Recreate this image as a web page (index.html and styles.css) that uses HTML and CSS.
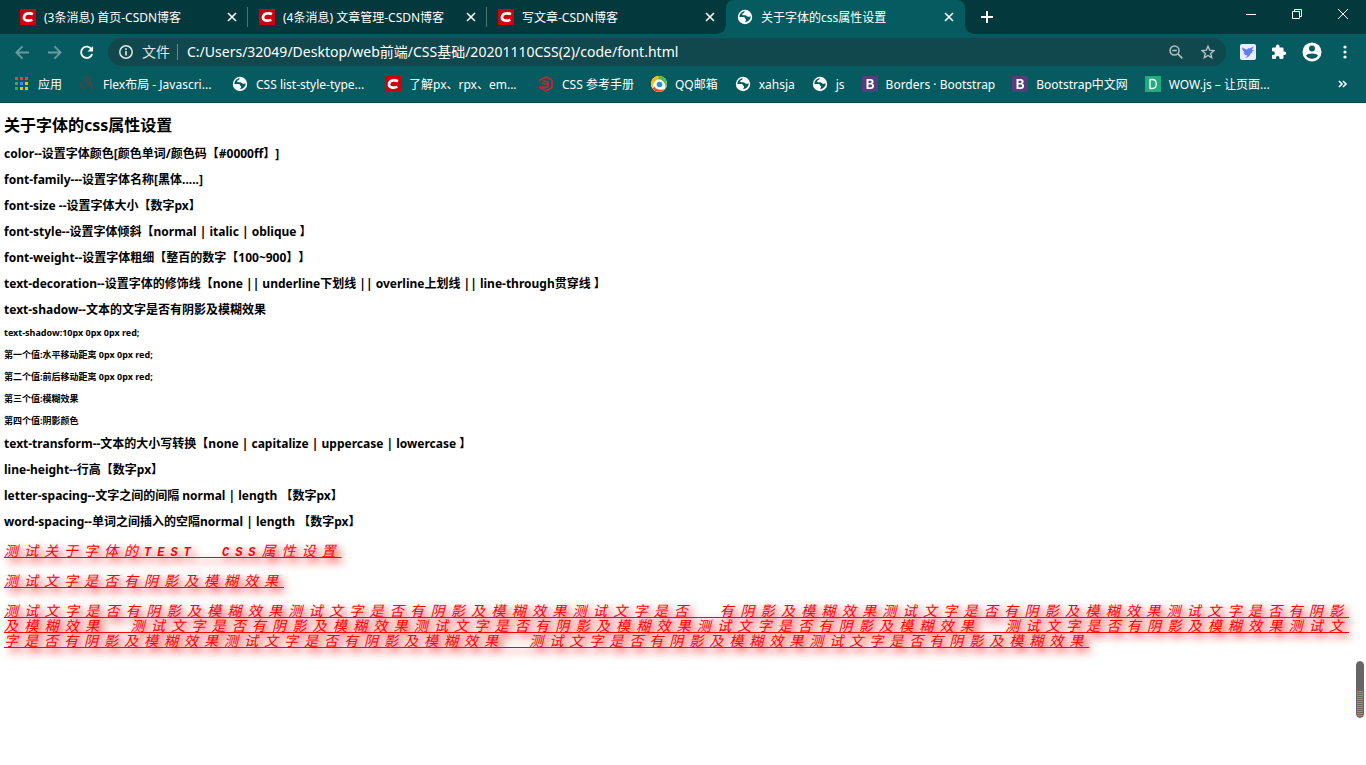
FILE: index.html
```html
<!DOCTYPE html>
<html lang="zh-CN">
<head>
<meta charset="utf-8">
<title>关于字体的css属性设置</title>
<link rel="stylesheet" href="styles.css">
</head>
<body>
<svg class="defs" aria-hidden="true">
  <symbol id="close" viewBox="0 0 10 10"><path d="M1 1l8 8M9 1l-8 8" stroke="currentColor" stroke-width="1.600" fill="none"/></symbol>
  <symbol id="csdn" viewBox="0 0 16 16"><path fill="#c9040f" d="M0 0h16v16H0z"/><path d="M13 5.200C10 3.700 4.600 4 4 8c-.6 4 5 4.200 8.400 2.900" fill="none" stroke="#fff" stroke-width="2.600"/></symbol>
  <symbol id="globe" viewBox="0 0 16 16"><circle cx="8" cy="8" r="7.200" fill="#fff"/><path d="M8.500 2.300c-1.300.2-1 1.300-1.700 1.700-.8.500-1.700.2-1.700 1.200 0 1.300 1.800 1 3.200 1 1.400.1 1.500 1.600 2.900 1.600 1 0 1.600-.5 2.600-.2-.2 3-2.300 5.300-5.500 5.600-.2-1.200.8-1.300.8-2.400 0-1-1.200-.9-1.200-1.800 0-.8-.8-1.100-2-1.100H2.400c0-3.100 2.600-5.800 6.100-5.600z" fill="#055b60"/></symbol>
  <symbol id="boot" viewBox="0 0 16 16"><rect width="16" height="16" rx="2" fill="#563d7c"/><path fill-rule="evenodd" fill="#fff" d="M4.500 3h4.200c1.900 0 2.900.9 2.900 2.400 0 1-.5 1.800-1.400 2.200 1.200.3 1.900 1.200 1.900 2.400 0 1.900-1.300 3-3.400 3H4.500zM6.500 4.700v2.200h1.700c.9 0 1.400-.4 1.400-1.100S9.100 4.700 8.200 4.700zM6.500 8.500v2.800h1.900c1 0 1.600-.5 1.600-1.400s-.6-1.400-1.600-1.400z"/></symbol>
</svg>

<header class="browser">
  <div class="strip">
    <nav class="tabs" aria-label="标签页">
      <div class="tab"><svg class="icon"><use href="#csdn"/></svg><span class="label">(3条消息) 首页-CSDN博客</span><button class="close" aria-label="关闭"><svg><use href="#close"/></svg></button></div>
      <div class="tab"><svg class="icon"><use href="#csdn"/></svg><span class="label">(4条消息) 文章管理-CSDN博客</span><button class="close" aria-label="关闭"><svg><use href="#close"/></svg></button></div>
      <div class="tab plain"><svg class="icon"><use href="#csdn"/></svg><span class="label">写文章-CSDN博客</span><button class="close" aria-label="关闭"><svg><use href="#close"/></svg></button></div>
      <div class="tab active"><svg class="icon"><use href="#globe"/></svg><span class="label">关于字体的css属性设置</span><button class="close" aria-label="关闭"><svg><use href="#close"/></svg></button></div>
    </nav>
    <button class="new" aria-label="新标签页"><svg viewBox="0 0 12 12"><path d="M6 0v12M0 6h12" stroke="#fff" stroke-width="2"/></svg></button>
    <div class="window">
      <button aria-label="最小化"><svg viewBox="0 0 10 10"><path d="M0 5.500h10" stroke="#fff"/></svg></button>
      <button aria-label="还原"><svg viewBox="0 0 10 10"><path d="M.5 2.500h7v7h-7zM2.500 2.500v-2h7v7h-2" fill="none" stroke="#fff"/></svg></button>
      <button aria-label="关闭窗口"><svg viewBox="0 0 10 10"><path d="M0 0l10 10M10 0L0 10" stroke="#fff"/></svg></button>
    </div>
  </div>

  <div class="toolbar">
    <button class="tool dim" aria-label="后退"><svg viewBox="0 0 16 16"><path d="M15 8H2M8 1.500L1.500 8 8 14.500" fill="none" stroke="currentColor" stroke-width="2"/></svg></button>
    <button class="tool dim" aria-label="前进"><svg viewBox="0 0 16 16"><path d="M1 8h13M8 1.500L14.500 8 8 14.500" fill="none" stroke="currentColor" stroke-width="2"/></svg></button>
    <button class="tool" aria-label="重新加载"><svg viewBox="0 0 16 16"><path d="M13.300 4.500A6 6 0 1 0 14 9.500" fill="none" stroke="#fff" stroke-width="2"/><path d="M15 1v6H9z" fill="#fff"/></svg></button>
    <div class="omnibox">
      <svg class="info" viewBox="0 0 14 14"><circle cx="7" cy="7" r="6.200" fill="none" stroke="#dfe8e8" stroke-width="1.500"/><path d="M7 6v4.500M7 3.200v1.700" stroke="#dfe8e8" stroke-width="1.600"/></svg>
      <label class="scheme" for="url">文件</label>
      <input id="url" class="url" type="text" value="C:/Users/32049/Desktop/web前端/CSS基础/20201110CSS(2)/code/font.html">
      <button class="inner" aria-label="缩放"><svg viewBox="0 0 14 14"><circle cx="5.500" cy="5.500" r="4.500" fill="none" stroke="#b4c2c3" stroke-width="1.500"/><path d="M9 9l4.300 4.300M3.200 5.500h4.600" stroke="#b4c2c3" stroke-width="1.700"/></svg></button>
      <button class="inner" aria-label="收藏"><svg viewBox="0 0 14 14"><path d="M7 1.200l1.700 4 4.300.4-3.300 2.900 1 4.200L7 10.500l-3.700 2.200 1-4.200L1 5.600l4.300-.4z" fill="none" stroke="#b4c2c3" stroke-width="1.400"/></svg></button>
    </div>
    <div class="extras">
      <button class="ext" aria-label="飞鸟扩展"><svg viewBox="0 0 16 16"><rect width="16" height="16" rx="2" fill="#e9ecfb"/><path d="M2 3.500l5 2.300c.5-1.200 1.500-1.700 2.700-1.300L14 2.200l-2.300 3.700 2.600.1-2.400 1.700 1 .6-2.300 1.300c-.5 2.400-2.200 3.800-5.200 4.300l2-2.500C4.500 11 3.300 9.500 3.700 8.200l1.400.3C3.200 7.100 2.200 5.500 2 3.500z" fill="#617df2"/></svg></button>
      <button class="ext" aria-label="扩展程序"><svg viewBox="0 0 16 16"><path d="M13.500 7.500h-1V4.700c0-.8-.6-1.300-1.300-1.300H8.500v-1a1.800 1.800 0 0 0-3.600 0v1H2.200C1.500 3.400 1 4 1 4.700v2.600h1a1.900 1.900 0 0 1 0 3.800H1v2.600c0 .7.500 1.300 1.200 1.300h2.600v-1a1.900 1.900 0 0 1 3.800 0v1h2.600c.7 0 1.300-.6 1.300-1.300v-2.600h1a1.800 1.800 0 0 0 0-3.600z" fill="#fff"/></svg></button>
      <button class="ext big" aria-label="用户"><svg viewBox="0 0 20 20"><circle cx="10" cy="10" r="9.500" fill="#fff"/><circle cx="10" cy="6.500" r="3" fill="#055b60"/><path d="M4 13.700c1.200-3 10.800-3 12 0-2.700 3.900-9.300 3.900-12 0z" fill="#055b60"/></svg></button>
      <button class="ext" aria-label="菜单"><svg viewBox="0 0 16 16"><circle cx="8" cy="3" r="1.600" fill="#fff"/><circle cx="8" cy="8" r="1.600" fill="#fff"/><circle cx="8" cy="13" r="1.600" fill="#fff"/></svg></button>
    </div>
  </div>

  <nav class="bookmarks" aria-label="书签栏">
    <a href="#"><svg class="icon" viewBox="0 0 16 16"><path fill="#ea4335" d="M1 1h3v3H1zM6 1h3v3H6zM11 1h3v3h-3z"/><path fill="#34a853" d="M1 6h3v3H1zM1 11h3v3H1z"/><path fill="#4285f4" d="M6 6h3v3H6z"/><path fill="#fbbc05" d="M11 6h3v3h-3zM6 11h3v3H6zM11 11h3v3h-3z"/></svg><span>应用</span></a>
    <a href="#" class="long"><svg class="icon" viewBox="0 0 16 16"><circle cx="8.700" cy="3.500" r="2.600" fill="none" stroke="#43474a" stroke-width="1.600"/><path d="M1.500 5.500c.3 3 1.200 5.500 3 7 2.500-.8 5-3.500 7.200-6.500.3 3 1 5.500 2.500 8.500" fill="none" stroke="#43474a" stroke-width="1.800"/></svg><span>Flex布局 - Javascri...</span></a>
    <a href="#" class="long"><svg class="icon"><use href="#globe"/></svg><span>CSS list-style-type...</span></a>
    <a href="#" class="long"><svg class="icon"><use href="#csdn"/></svg><span>了解px、rpx、em...</span></a>
    <a href="#"><svg class="icon" viewBox="0 0 16 16"><path d="M2 5.500V4l6-3 6 3v7.500L8 15l-6-3.500V10M5 4.500l5 1.500v2.500L4 7M10 8.500v2L7.500 12 4 10.500" fill="none" stroke="#d5252c" stroke-width="1.500"/></svg><span>CSS 参考手册</span></a>
    <a href="#"><svg class="icon" viewBox="0 0 16 16"><circle cx="8" cy="8" r="8" fill="#fff"/><path d="M8 0a8 8 0 0 0-6.500 12.500C2 6 5 4 9 4z" fill="#fcb913"/><path d="M8 0a8 8 0 0 1 6.500 12.500C15 7 12 4 7 3z" fill="#59b947"/><path d="M1.500 12.500a8 8 0 0 0 13 0C11 15 6 14 4 10z" fill="#ef4e23"/><circle cx="8" cy="8.500" r="5" fill="#fff"/><circle cx="8.500" cy="8.500" r="2.800" fill="#2390dc"/></svg><span>QQ邮箱</span></a>
    <a href="#"><svg class="icon"><use href="#globe"/></svg><span>xahsja</span></a>
    <a href="#"><svg class="icon"><use href="#globe"/></svg><span>js</span></a>
    <a href="#"><svg class="icon"><use href="#boot"/></svg><span>Borders · Bootstrap</span></a>
    <a href="#"><svg class="icon"><use href="#boot"/></svg><span>Bootstrap中文网</span></a>
    <a href="#"><svg class="icon" viewBox="0 0 16 16"><path fill="#22ac7d" d="M0 0h16v16H0z"/><path d="M5 3.500h2.500c5 0 5 9 0 9H5z" fill="none" stroke="#fff" stroke-width="1.300"/></svg><span>WOW.js – 让页面...</span></a>
    <button class="more" aria-label="更多书签"><svg viewBox="0 0 10 8"><path d="M1 1l3 3-3 3M5 1l3 3-3 3" fill="none" stroke="#fff" stroke-width="1.600"/></svg></button>
  </nav>
</header>

<main class="page">
  <h1>关于字体的css属性设置</h1>
  <div class="group">
    <h2>color--设置字体颜色[颜色单词/颜色码【#0000ff】]</h2>
    <h2>font-family---设置字体名称[黑体.....]</h2>
    <h2>font-size --设置字体大小【数字px】</h2>
    <h2>font-style--设置字体倾斜【normal | italic | oblique 】</h2>
    <h2>font-weight--设置字体粗细【整百的数字【100~900】】</h2>
    <h2>text-decoration--设置字体的修饰线【none || underline下划线 || overline上划线 || line-through贯穿线 】</h2>
    <h2>text-shadow--文本的文字是否有阴影及模糊效果</h2>
  </div>
  <div class="group small">
    <h3>text-shadow:10px 0px 0px red;</h3>
    <h3>第一个值:水平移动距离 0px 0px red;</h3>
    <h3>第二个值:前后移动距离 0px 0px red;</h3>
    <h3>第三个值:模糊效果</h3>
    <h3>第四个值:阴影颜色</h3>
  </div>
  <div class="group">
    <h2>text-transform--文本的大小写转换【none | capitalize | uppercase | lowercase 】</h2>
    <h2>line-height--行高【数字px】</h2>
    <h2>letter-spacing--文字之间的间隔 normal | length 【数字px】</h2>
    <h2>word-spacing--单词之间插入的空隔normal | length 【数字px】</h2>
  </div>
  <div class="samples">
    <p>测试关于字体的<span class="latin">TEST</span> <span class="latin">CSS</span>属性设置</p>
    <p>测试文字是否有阴影及模糊效果</p>
    <p>测试文字是否有阴影及模糊效果测试文字是否有阴影及模糊效果测试文字是否 有阴影及模糊效果测试文字是否有阴影及模糊效果测试文字是否有阴影及模糊效果 测试文字是否有阴影及模糊效果测试文字是否有阴影及模糊效果测试文字是否有阴影及模糊效果 测试文字是否有阴影及模糊效果测试文字是否有阴影及模糊效果测试文字是否有阴影及模糊效果 测试文字是否有阴影及模糊效果测试文字是否有阴影及模糊效果</p>
  </div>
  <div class="thumb"></div>
</main>
</body>
</html>
```
FILE: styles.css
```css
* { box-sizing: border-box; }

body {
  margin: 0;
  min-height: 100vh;
  display: flex;
  flex-direction: column;
  background: #fff;
  color: #000;
  font-family: "Noto Sans", "Noto Sans CJK SC", sans-serif;
  font-size: 12px;
  text-spacing-trim: space-all;
}

button {
  display: flex;
  align-items: center;
  justify-content: center;
  padding: 0;
  border: 0;
  background: none;
  color: #fff;
}

.defs { position: absolute; width: 0; height: 0; }
.icon { width: 16px; height: 16px; flex: none; }

.browser { background: #055b60; color: #fff; border-bottom: 1px solid #05474b; }

/* tab strip */
.strip { display: flex; height: 34px; background: #03393d; }
.tabs { display: flex; flex: 0 1 965px; padding-left: 9px; min-width: 0; }
.tab {
  position: relative;
  display: flex;
  flex: 1 1 0;
  align-items: center;
  min-width: 0;
  padding: 0 11px;
  gap: 8px;
}
.tab::after {
  content: "";
  position: absolute;
  right: 0;
  top: 7px;
  width: 1px;
  height: 20px;
  background: #4b7376;
}
.tab.plain::after { display: none; }
.tab.active { background: #055b60; border-radius: 8px 8px 0 0; }

/* outward curves at the foot of the active tab */
.tab.active::before,
.tab.active::after {
  content: "";
  position: absolute;
  top: auto;
  bottom: 0;
  width: 8px;
  height: 8px;
}
.tab.active::before { left: -8px; background: radial-gradient(circle at 0 0, transparent 7px, #055b60 8px); }
.tab.active::after { right: -8px; background: radial-gradient(circle at 100% 0, transparent 7px, #055b60 8px); }

.label { flex: 1; overflow: hidden; white-space: nowrap; line-height: 20px; padding-top: 1px; }
.close { width: 10px; height: 16px; }
.close svg { width: 10px; height: 10px; }
.new { width: 44px; }
.new svg { width: 12px; height: 12px; }
.window { display: flex; margin-left: auto; height: 28px; }
.window button { width: 46px; }
.window svg { width: 10px; height: 10px; }

/* toolbar */
.toolbar { display: flex; align-items: center; height: 36px; padding: 0 13px 0 6px; }
.tool { width: 32px; height: 32px; }
.tool svg { width: 15px; height: 15px; }
.tool.dim { color: #6a9a9d; }
.omnibox {
  display: flex;
  align-items: center;
  flex: 1;
  height: 28px;
  margin-left: 6px;
  padding: 0 10px 0 11px;
  border-radius: 14px;
  background: #10484d;
}
.info { width: 14px; height: 14px; }
.scheme {
  margin-left: 9px;
  padding-right: 7px;
  border-right: 1px solid #678789;
  font-size: 14px;
  line-height: 16px;
  color: #dfe8e8;
}
.url {
  flex: 1;
  min-width: 0;
  padding: 0 0 2px 9px;
  border: 0;
  outline: 0;
  background: none;
  color: #fff;
  font: inherit;
  font-size: 14px;
}
.inner { width: 16px; height: 28px; margin-left: 16px; }
.inner svg { width: 14px; height: 14px; }
.extras { display: flex; align-items: center; gap: 15px; margin-left: 14px; }
.ext { width: 16px; height: 20px; }
.ext svg { width: 16px; height: 16px; }
.ext.big { width: 20px; }
.ext.big svg { width: 20px; height: 20px; }

/* bookmarks */
.bookmarks { display: flex; align-items: center; height: 32px; padding: 0 18px 4px 14px; gap: 17px; }
.bookmarks a {
  display: flex;
  align-items: center;
  gap: 8px;
  color: #fff;
  text-decoration: none;
  white-space: nowrap;
}
.bookmarks .long { width: 136px; }
.more { margin-left: auto; }
.more svg { width: 10px; height: 8px; }

/* document */
.page { position: relative; flex: 1; padding: 11px 17px 0 4px; }
h1, h2, h3, p { margin: 0; }
h1 { font-size: 16px; line-height: 22px; margin-bottom: 10px; }
.group { display: grid; gap: 10px; }
h2 { font-size: 12px; line-height: 16px; }
.small { margin: 9px 0; }
h3 { font-size: 9px; line-height: 12px; }

.samples {
  display: grid;
  gap: 15px;
  margin-top: 13px;
  color: #f00;
  font-family: "Noto Sans CJK SC", sans-serif;
  font-size: 14px;
  font-style: italic;
  line-height: 15px;
  letter-spacing: 6px;
  word-spacing: 16px;
  text-align: justify;
}
.samples p {
  text-decoration: underline;
  text-shadow: 4px 4px 8px #f00;
}
.latin {
  font-family: "Liberation Mono", monospace;
  font-size: 12px;
  font-weight: 700;
  line-height: 10px;
}

.thumb {
  position: absolute;
  right: 2px;
  bottom: 47px;
  width: 8px;
  height: 57px;
  border-radius: 4px;
  border: 1px solid #666;
  background: linear-gradient(#666 29px, transparent 29px), repeating-linear-gradient(#666 0 1px, #2fcf60 1px 2px);
}
```
